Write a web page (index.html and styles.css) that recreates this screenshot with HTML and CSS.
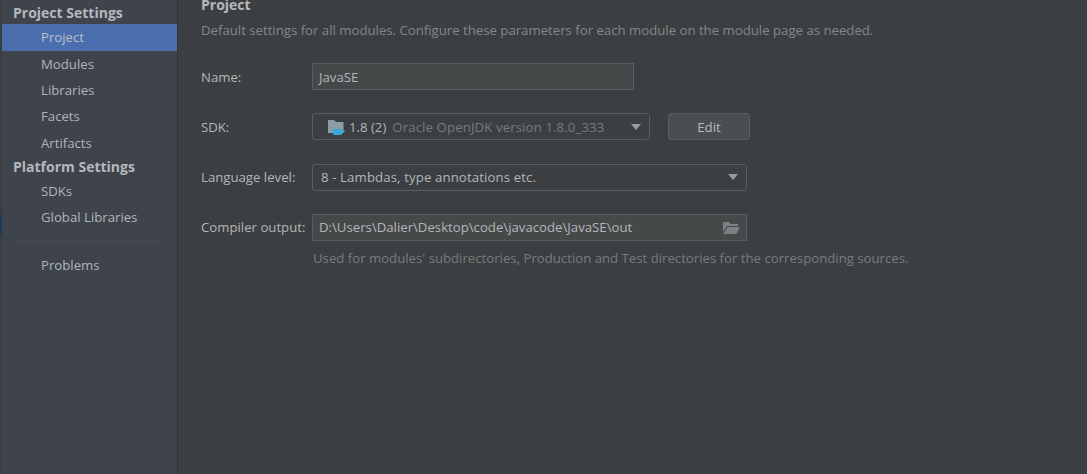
FILE: index.html
```html
<!DOCTYPE html>
<html lang="en">
<head>
<meta charset="utf-8">
<title>Project Settings</title>
<link rel="stylesheet" href="styles.css">
</head>
<body>
<div class="app">
  <aside class="sidebar">
    <div class="edge"><span class="edge-mark"></span></div>
    <nav class="nav">
      <div class="group">Project Settings</div>
      <div class="item selected">Project</div>
      <div class="item">Modules</div>
      <div class="item">Libraries</div>
      <div class="item">Facets</div>
      <div class="item">Artifacts</div>
      <div class="group group-2">Platform Settings</div>
      <div class="item item-sdks">SDKs</div>
      <div class="item">Global Libraries</div>
      <div class="sep"></div>
      <div class="item">Problems</div>
    </nav>
  </aside>
  <main class="pane">
    <h1 class="title">Project</h1>
    <p class="desc">Default settings for all modules. Configure these parameters for each module on the module page as needed.</p>
    <div class="form">
      <label class="label">Name:</label>
      <div class="field name-field">JavaSE</div>

      <label class="label">SDK:</label>
      <div class="sdk-row">
        <div class="combo sdk-combo">
          <svg class="sdk-icon" width="18" height="18" viewBox="0 0 18 18">
            <path d="M1 2h6l2 2h7.500v11H1z" fill="#8f9ba5"/>
            <path d="M5.500 11h10v3.500a2.500 2.500 0 0 1-2.500 2.500H8a2.500 2.500 0 0 1-2.500-2.500z" fill="#3ba8dc"/>
            <path d="M15 12h2.500v2H15z" fill="#3ba8dc"/>
          </svg>
          <span class="sdk-name">1.8 (2)</span>
          <span class="sdk-desc">Oracle OpenJDK version 1.8.0_333</span>
          <span class="arrow"></span>
        </div>
        <button class="btn">Edit</button>
      </div>

      <label class="label">Language level:</label>
      <div class="combo lang-combo">
        <span class="lang-text">8 - Lambdas, type annotations etc.</span>
        <span class="arrow"></span>
      </div>

      <label class="label">Compiler output:</label>
      <div class="field path-field">
        <span>D:\Users\Dalier\Desktop\code\javacode\JavaSE\out</span>
        <svg class="open-icon" width="17" height="13" viewBox="0 0 17 13">
          <path d="M0 1h6l1.500 2H15v2H4L0 11z" fill="#7d8082"/>
          <path d="M4.500 6H17l-3.500 7H0z" fill="#7d8082"/>
        </svg>
      </div>
      <p class="hint">Used for modules' subdirectories, Production and Test directories for the corresponding sources.</p>
    </div>
  </main>
</div>
</body>
</html>
```
FILE: styles.css
```css
* { box-sizing: border-box; }
html, body { margin: 0; height: 100%; overflow: hidden; }
body {
  background: #3c3f41;
  color: #bbbbbb;
  font-family: "Open Sans", "Noto Sans", sans-serif;
  font-size: 13.2px;
}
.app { display: flex; height: 474px; }
.sidebar {
  width: 178px;
  flex: none;
  display: flex;
  background: #3e434c;
  border-right: 1px solid #323232;
}
.edge { width: 2px; flex: none; background: #3a3d42; padding-top: 214px; }
.edge-mark { display: block; height: 22px; background: #1d3d56; }
.nav { flex: 1; padding-top: 3.400px; min-width: 0; }
.group { height: 21px; line-height: 20px; padding-left: 11px; font-weight: 700; font-size: 14px; color: #b4b8bc; }
.group-2 { height: 20px; margin-top: 1px; }
.item { height: 26.300px; line-height: 26px; padding-left: 39px; color: #b0b4b8; }
.item-sdks { margin-top: 1px; }
.selected { background: #4b6eaf; color: #b9c0c9; }
.sep { height: 1px; margin: 11px 14px 10px 11px; background: #4a4b4d; }
.pane { flex: 1; padding: 0 0 0 23px; min-width: 0; }
.title { margin: 0; font-size: 14px; line-height: 10px; font-weight: 700; color: #b4b8bc; }
.desc { margin: 10px 0 0; line-height: 20px; color: #83878a; }
.form {
  display: grid;
  grid-template-columns: 111px max-content;
  align-items: center;
  row-gap: 23.300px;
  margin-top: 23px;
  justify-content: start;
}
.label { line-height: 18px; color: #b4b6b8; }
.field, .combo {
  height: 27px;
  display: flex;
  align-items: center;
  border: 1px solid #5a5d5f;
  color: #b4b6b8;
}
.field { background: #45494a; padding: 0 6px; }
.combo { background: #3c3f41; border-radius: 3px; position: relative; padding: 0 8px; }
.name-field { width: 322px; }
.sdk-row { display: flex; gap: 18px; }
.sdk-combo { width: 338px; padding-left: 14px; }
.sdk-icon { flex: none; margin-right: 4px; }
.sdk-name { color: #b4b6b8; margin-right: 6px; }
.sdk-desc { color: #787b7d; letter-spacing: 0.120px; }
.lang-combo { width: 435px; }
.lang-text { letter-spacing: 0.120px; }
.arrow {
  margin-left: auto;
  width: 0;
  height: 0;
  border-left: 5px solid transparent;
  border-right: 5px solid transparent;
  border-top: 6px solid #9a9d9f;
}
.btn {
  width: 82px;
  height: 27px;
  background: #4a4e50;
  border: 1px solid #5a5d5f;
  border-radius: 3px;
  color: #bbbbbb;
  font: inherit;
  padding: 0;
}
.path-field { width: 435px; }
.open-icon { margin-left: auto; margin-top: 1px; flex: none; }
.hint {
  grid-column: 2;
  margin: -15.300px 0 0 1px;
  line-height: 18px;
  color: #787b7d;
}
```
